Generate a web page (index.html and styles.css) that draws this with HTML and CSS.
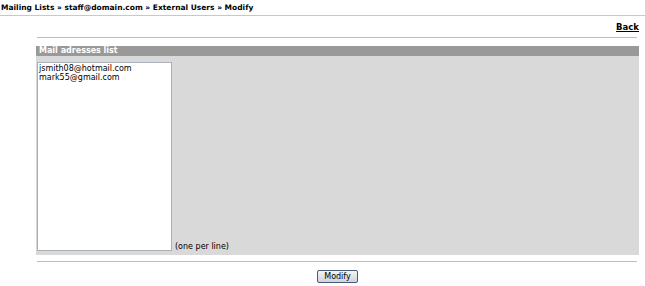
FILE: index.html
```html
<!DOCTYPE html>
<html lang="en">
<head>
  <meta charset="UTF-8" />
  <title>Modify external users</title>
  <link rel="stylesheet" href="styles.css">
</head>
<body>
  <h1 class="crumbs">Mailing Lists &raquo; staff@domain.com &raquo; External Users &raquo; Modify</h1>

  <div class="content">
    <div class="back-row"><a href="#">Back</a></div>
    <hr class="sep" />

    <form class="panel">
      <div class="panel-head">Mail adresses list</div>
      <div class="panel-body">
        <textarea class="addresses">jsmith08@hotmail.com
mark55@gmail.com</textarea>
        <span class="hint">(one per line)</span>
      </div>
    </form>

    <hr class="sep" />
    <div class="actions">
      <button type="button" class="btn">Modify</button>
    </div>
  </div>
</body>
</html>
```

FILE: styles.css
```css
body {
  margin: 0;
  font-family: 'DejaVu Sans', sans-serif;
  font-size: 8px;
  color: #000;
  background: #fff;
}
.crumbs {
  margin: 0;
  padding: 3px 1px 3px;
  font-size: 7.5px;
  font-weight: bold;
  line-height: 9px;
  border-bottom: 1px solid #c8c8c8;
}
.content {
  padding: 0 6px 0 36px;
}
.back-row {
  text-align: right;
  padding: 6px 0 4px;
  line-height: 10px;
}
.back-row a {
  color: #000;
  font-weight: bold;
  font-size: 8.5px;
}
.sep {
  border: 0;
  border-top: 1px solid #bdbdbd;
  margin: 0 2px 0 1px;
  height: 0;
}
.panel {
  margin: 8px 0 0;
}
.panel-head {
  background: #999;
  color: #fff;
  font-weight: bold;
  height: 10px;
  line-height: 10px;
  padding: 0 3px;
}
.panel-body {
  background: #d9d9d9;
  display: flex;
  align-items: flex-end;
  padding: 6px 0 4px 1px;
}
.addresses {
  width: 135px;
  height: 189px;
  box-sizing: border-box;
  margin: 0;
  padding: 1px;
  border: 1px solid #aab0b8;
  font-family: 'DejaVu Sans', sans-serif;
  font-size: 8px;
  line-height: 9px;
  resize: none;
}
.hint {
  margin-left: 3px;
  line-height: 9px;
}
.panel + .sep {
  margin-top: 6px;
}
.actions {
  text-align: center;
  padding-top: 8px;
}
.btn {
  font-family: 'DejaVu Sans', sans-serif;
  font-size: 8px;
  padding: 1px 6px;
  border: 1px solid #4a5a7a;
  border-radius: 2px;
  background: linear-gradient(#f4f4f4, #cfd3da);
  line-height: 9px;
}
```
